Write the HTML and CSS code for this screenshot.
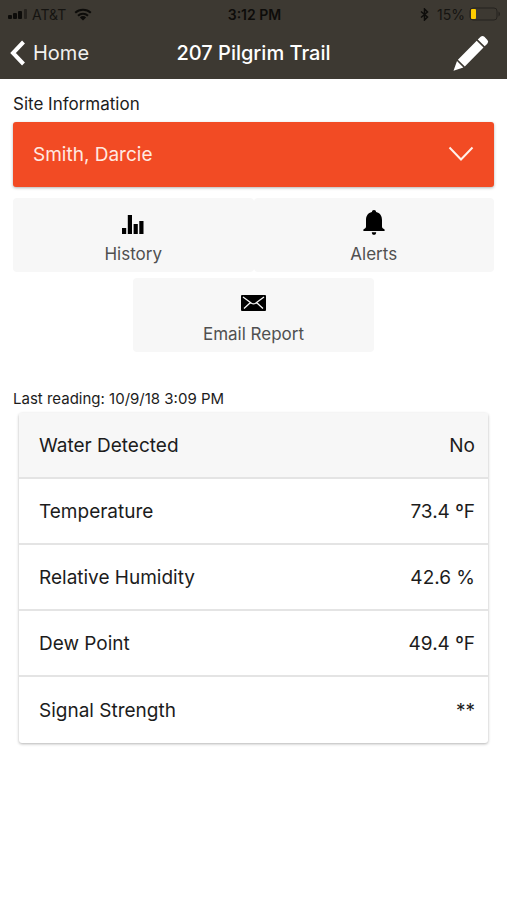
FILE: index.html
```html
<!DOCTYPE html>
<html lang="en">
<head>
<meta charset="utf-8">
<meta name="viewport" content="width=device-width, initial-scale=1">
<title>207 Pilgrim Trail</title>
<link rel="stylesheet" href="styles.css">
</head>
<body>
<header class="top">
  <div class="status">
    <div class="status-side">
      <svg width="20" height="12" viewBox="0 0 20 12" aria-hidden="true"><rect x="0" y="7" width="4" height="4" rx="1"/><rect x="5" y="5" width="4" height="6" rx="1"/><rect x="10" y="3" width="4" height="8" rx="1"/><rect class="faint" x="16" y="1" width="3" height="10" rx="1"/></svg>
      <span class="carrier">AT&amp;T</span>
      <svg class="wifi" width="18" height="13" viewBox="0 0 18 13" aria-hidden="true"><path d="M1.2 4.7a11.5 11.5 0 0 1 15.6 0M4 7.7a7.4 7.4 0 0 1 10 0"/><path class="solid" d="M9 12.6 5.9 9.4a4.4 4.4 0 0 1 6.2 0z"/></svg>
    </div>
    <span class="clock">3:12 PM</span>
    <div class="status-side status-right">
      <svg class="bluetooth" width="9" height="13" viewBox="0 0 9 13" aria-hidden="true"><path d="M1 3.5 7.5 9 4.500 12V1l3 3L1 9.500"/></svg>
      <span class="percent">15%</span>
      <svg width="32" height="14" viewBox="0 0 32 14" aria-hidden="true"><rect class="cell" x="1" y="1" width="27" height="12" rx="3"/><rect class="charge" x="2" y="2" width="5" height="10" rx="1"/><path class="faint" d="M29.500 4.500c2 1 2 4 0 5z"/></svg>
    </div>
  </div>
  <nav class="nav">
    <a class="back" href="#home"><svg width="16" height="26" viewBox="0 0 16 26" aria-hidden="true"><path d="M13.500 2 3 13l10.500 11"/></svg><span>Home</span></a>
    <h1 class="title">207 Pilgrim Trail</h1>
    <button class="edit" type="button" aria-label="Edit site"><svg width="36" height="36" viewBox="0 0 36 36" aria-hidden="true"><path d="M24.800 4.600 27.600 1.800Q29.500 0 31.400 1.800L34.400 5Q36 6.800 34.300 8.700L31.700 11.300zM23.700 5.700 30.500 12.500 11.800 31.500 4.900 24.700zM4 26.100 10.400 32.500.5 35.800z"/></svg></button>
  </nav>
</header>
<main class="content">
  <label class="label" for="site">Site Information</label>
  <div class="picker">
    <select id="site" class="select"><option>Smith, Darcie</option></select>
    <svg class="chevron" width="26" height="16" viewBox="0 0 26 16" aria-hidden="true"><path d="m1.500 1.500 11.500 12 11.500-12"/></svg>
  </div>
  <div class="actions">
    <button class="action" type="button"><span class="icon"><svg width="22" height="20" viewBox="0 0 22 20" aria-hidden="true"><path d="M0 13h4.200v6H0zM5.800 0H10v19H5.800zM11.600 9h4.200v10h-4.200zM17.300 6h4.200v13h-4.200z"/></svg></span><span>History</span></button>
    <button class="action" type="button"><span class="icon"><svg width="22" height="25" viewBox="0 0 22 25" aria-hidden="true"><path d="M11 0c1.400 0 2 .8 2.100 2.100C17 3 19 6 19 10v6.500c0 1.400 1 2.200 2.600 2.900V21H.4v-1.600C2 18.700 3 17.900 3 16.500V10c0-4 2-7 5.900-7.900C9 .8 9.600 0 11 0zM8.800 22.200h4.400c0 1.600-.9 2.600-2.200 2.600s-2.200-1-2.200-2.600z"/></svg></span><span>Alerts</span></button>
    <button class="action" type="button"><span class="icon mail"><svg width="25" height="16" viewBox="0 0 25 16" aria-hidden="true"><rect width="25" height="16" rx="1"/><path d="m2 2 8.500 6.200q2 1.300 4 0L23 2M3 13.500l6.500-6M22 13.500l-6.500-6"/></svg></span><span>Email Report</span></button>
  </div>
  <table class="readings">
    <caption>Last reading: 10/9/18 3:09 PM</caption>
    <tbody>
      <tr><th scope="row">Water Detected</th><td>No</td></tr>
      <tr><th scope="row">Temperature</th><td>73.4 ºF</td></tr>
      <tr><th scope="row">Relative Humidity</th><td>42.6 %</td></tr>
      <tr><th scope="row">Dew Point</th><td>49.4 ºF</td></tr>
      <tr><th scope="row">Signal Strength</th><td>**</td></tr>
    </tbody>
  </table>
</main>
</body>
</html>
```
FILE: styles.css
```css
* { box-sizing: border-box; }
body { margin: 0; background: #fff; color: #1c1c1c; font-family: Inter, "Liberation Sans", sans-serif; font-size: 19px; }
button, select { border: 0; font: inherit; }
svg { display: block; flex: none; }

.top { height: 79px; background: #3d3932; }
.status { display: grid; grid-template-columns: 1fr auto 1fr; align-items: center; height: 28px; padding: 0 6px 0 8px; color: #0d0c0a; font-size: 14px; }
.status svg { fill: #0d0c0a; }
.status-side { display: flex; align-items: center; gap: 4px; }
.status-right { justify-content: flex-end; }
.carrier, .percent { color: #151411; }
.clock { font-weight: 600; }
.status .faint { fill: #25221e; }
.status .wifi { fill: none; stroke: #0d0c0a; stroke-width: 2; margin-left: 4px; }
.status .solid { fill: #0d0c0a; stroke: none; }
.status .bluetooth { fill: none; stroke: #0d0c0a; stroke-width: 1.5; margin-right: 4px; }
.status .cell { fill: none; stroke: #25221e; }
.status .charge { fill: #fc0; }

.nav { display: grid; grid-template-columns: 1fr auto 1fr; align-items: center; height: 50px; padding: 0 10px; color: #fff; }
.back { display: flex; align-items: center; gap: 7px; color: #f2f1ef; font-size: 20px; text-decoration: none; }
.back svg { fill: none; stroke: #fff; stroke-width: 4; }
.title { margin: 0; font-size: 20px; font-weight: 500; }
.edit { justify-self: end; padding: 0 8px; background: none; }
.edit svg { fill: #fff; }

.content { padding: 13px 13px 40px; }
.label { display: block; height: 30px; font-size: 17px; line-height: 24px; }
.picker { position: relative; }
.select { display: block; width: 100%; height: 65px; padding: 0 60px 0 20px; appearance: none; border-radius: 3px; background: #f24b24; box-shadow: 0 1px 3px rgba(0, 0, 0, .3); color: #ffe9e1; font-size: 19px; }
.chevron { position: absolute; right: 20px; top: 24px; fill: none; stroke: #fff1eb; stroke-width: 2; pointer-events: none; }

.actions { display: flex; flex-wrap: wrap; justify-content: center; row-gap: 6px; margin-top: 11px; }
.action { display: flex; flex: 0 0 50%; flex-direction: column; align-items: center; justify-content: flex-start; gap: 7px; height: 74px; padding: 12px 0 0; border-radius: 4px; background: #f7f7f7; color: #505050; font-size: 17px; line-height: 24px; }
.icon { display: flex; align-items: flex-end; height: 25px; }
.mail { align-items: center; }
.mail path { fill: none; stroke: #f7f7f7; stroke-width: 1.3; }

.readings { width: calc(100% - 12px); margin: 35px 6px 0; border-collapse: separate; border-spacing: 0; border-radius: 3px; box-shadow: 0 1px 3px rgba(0, 0, 0, .3); }
.readings caption { height: 26px; margin-left: -6px; font-size: 15px; line-height: 24px; text-align: left; }
.readings th, .readings td { height: 66px; padding: 0 13px 0 20px; border-bottom: 2px solid #e4e4e4; font-weight: 400; text-align: left; }
.readings td { text-align: right; }
.readings tr:first-child > * { background: #f7f7f7; }
.readings tr:last-child > * { border-bottom: 0; }
```
